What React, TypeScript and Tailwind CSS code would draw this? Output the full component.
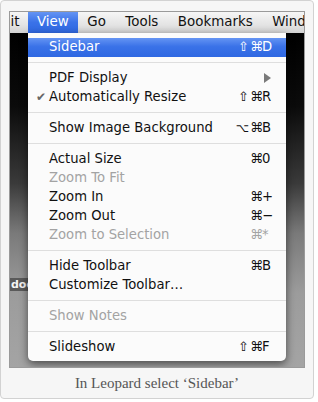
type MenuItem =
  | { sep: true }
  | {
      sep?: false;
      label: string;
      mod?: string;
      keyChar?: string;
      disabled?: boolean;
      checked?: boolean;
      submenu?: boolean;
      active?: boolean;
    };

const menuBar = ["View", "Go", "Tools", "Bookmarks", "Wind"];

const items: MenuItem[] = [
  { label: "Sidebar", mod: "⇧", keyChar: "D", active: true },
  { sep: true },
  { label: "PDF Display", submenu: true },
  { label: "Automatically Resize", mod: "⇧", keyChar: "R", checked: true },
  { sep: true },
  { label: "Show Image Background", mod: "⌥", keyChar: "B" },
  { sep: true },
  { label: "Actual Size", keyChar: "0" },
  { label: "Zoom To Fit", disabled: true },
  { label: "Zoom In", keyChar: "+" },
  { label: "Zoom Out", keyChar: "−" },
  { label: "Zoom to Selection", keyChar: "*", disabled: true },
  { sep: true },
  { label: "Hide Toolbar", keyChar: "B" },
  { label: "Customize Toolbar…" },
  { sep: true },
  { label: "Show Notes", disabled: true },
  { sep: true },
  { label: "Slideshow", mod: "⇧", keyChar: "F" },
];

function Row({ item }: { item: Exclude<MenuItem, { sep: true }> }) {
  const tone = item.active
    ? "bg-[linear-gradient(to_bottom,#6494f3,#3a72e8_45%,#2f68e2)] text-white"
    : item.disabled
      ? "text-[#a3a3a3]"
      : "text-[#111]";
  return (
    <div className={`flex h-[19px] items-center pr-[14px] ${tone}`}>
      <span className="w-[21px] shrink-0 pl-[8px] text-[12px] text-[#666]">{item.checked ? "✔" : ""}</span>
      <span className="flex-1 whitespace-nowrap">{item.label}</span>
      {item.submenu && (
        <svg width="7" height="10" viewBox="0 0 7 10" className="mr-[1px]">
          <path d="M0 0 L7 5 L0 10 Z" fill="#7a7a7a" />
        </svg>
      )}
      {item.keyChar && (
        <span className="flex shrink-0 items-center">
          <span className="w-[12px] whitespace-nowrap text-left">
            {item.mod === "⌥" ? <span className="-ml-[2px] text-[11.5px]">⌥</span> : (item.mod ?? "")}
          </span>
          <span className="w-[12px]">⌘</span>
          <span className="w-[10px]">{item.keyChar}</span>
        </span>
      )}
    </div>
  );
}

export default function App() {
  return (
    <div className="min-h-screen bg-white">
      <div className="w-[314px] rounded-[4px] border border-[#d2d2d2] bg-[#f6f6f6] px-[8px] pt-[10px]">
        <div className="flex h-[357px] flex-col overflow-hidden border border-[#9a9a9a] font-['DejaVu_Sans',sans-serif] text-[13.2px]">
          {/* menu bar */}
          <div className="flex h-[21px] shrink-0 items-center bg-[linear-gradient(to_bottom,#f6f6f6,#e4e4e4_60%,#d2d2d2)] text-[13.4px] text-[#111]">
            <span className="w-[18px] shrink-0 pl-[0.5px]">it</span>
            {menuBar.map((m) =>
              m === "View" ? (
                <span
                  key={m}
                  className="flex h-full shrink-0 items-center bg-[linear-gradient(to_bottom,#6494f3,#3a72e8_50%,#2f68e2)] px-[9px] text-white"
                >
                  {m}
                </span>
              ) : (
                <span key={m} className="shrink-0 whitespace-nowrap pl-[9.5px] pr-[10px]">
                  {m}
                </span>
              ),
            )}
          </div>

          {/* desktop behind the menu */}
          <div className="relative flex-1 bg-[linear-gradient(to_bottom,#000_0%,#0b0b0b_22%,#3a3a3a_45%,#7a7a7a_60%,#9c9c9c_78%,#a4a4a4_100%)] pl-[18px]">
            <span className="absolute left-0 top-[245px] bg-[#5a5a5a] px-[1px] text-[11px] leading-[13px] font-semibold text-[#f4f4f4]">
              doc
            </span>
            <div className="relative z-10 w-[258px] rounded-b-[5px] bg-[#fbfbfb] pt-[4.5px] pb-[4.5px] shadow-[0_3px_9px_rgba(0,0,0,0.55)]">
              {items.map((it, i) =>
                it.sep ? (
                  <div key={i} className="flex h-[12px] items-center">
                    <div className="h-px w-full bg-[#dedede]" />
                  </div>
                ) : (
                  <Row key={i} item={it} />
                ),
              )}
            </div>
          </div>
        </div>
        <div className="flex h-[30px] items-center justify-center font-['Liberation_Serif',serif] text-[15px] text-[#555]">
          In Leopard select ‘Sidebar’
        </div>
      </div>
    </div>
  );
}
